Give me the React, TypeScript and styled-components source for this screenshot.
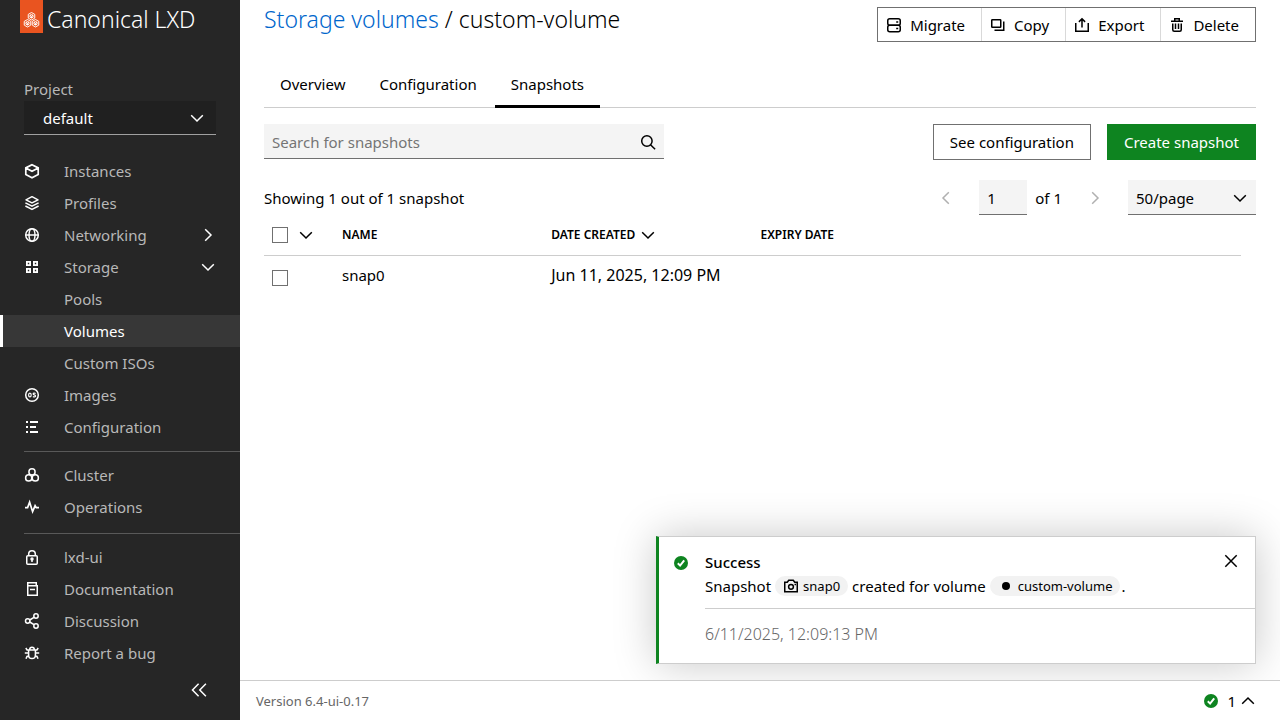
import React from "react";
import styled, { createGlobalStyle, css } from "styled-components";

const GlobalStyle = createGlobalStyle`
  *, *::before, *::after { box-sizing: border-box; }
  body {
    margin: 0;
    background: #fff;
    color: #000;
    font-family: "Noto Sans", "Open Sans", sans-serif;
    font-size: 15px;
    line-height: 24px;
  }
  button, input, select { font: inherit; color: inherit; }
  a { color: inherit; text-decoration: none; }
  svg { display: block; flex: none; }
`;

/* ---------- Icons ---------- */

const Svg = styled.svg.attrs({ viewBox: "0 0 16 16", width: 16, height: 16, "aria-hidden": true })`
  fill: none;
  stroke: currentColor;
  stroke-width: 1.5;
`;

type ChevronDirection = "down" | "up" | "left" | "right";
const chevrons: Record<ChevronDirection, string> = {
  down: "M2.2 5.2 8 11l5.8-5.8",
  up: "M2.2 10.8 8 5l5.8 5.8",
  left: "M10.8 2.2 5 8l5.8 5.8",
  right: "M5.2 2.2 11 8l-5.8 5.8",
};
const Chevron = ({ to }: { to: ChevronDirection }) => (
  <Svg><path d={chevrons[to]} /></Svg>
);

const icons = {
  instances: <Svg><path d="M8 1.8 14.200 4.900V11.500L8 14.700 1.800 11.500V4.900zM1.800 4.900 8 8.200l6.200-3.300" strokeWidth="1.700" /></Svg>,
  profiles: (
    <Svg strokeLinejoin="round">
      <path d="M8 1.700 14 4.800 8 7.900 2 4.800z" />
      <path d="M1.400 7.800 8 11.200l6.600-3.400M1.400 11 8 14.400l6.600-3.400" />
    </Svg>
  ),
  networking: (
    <Svg>
      <circle cx="8" cy="8" r="6.300" />
      <ellipse cx="8" cy="8" rx="3" ry="6.300" />
      <path d="M1.700 8h12.600" />
    </Svg>
  ),
  storage: (
    <Svg>
      <path
        d="M2.900 2.900h3.200v3.200H2.900zM9.900 2.900h3.200v3.200H9.900zM2.900 9.900h3.200v3.200H2.900zM9.900 9.900h3.200v3.200H9.900z"
        strokeWidth="1.800"
      />
    </Svg>
  ),
  images: (
    <Svg>
      <circle cx="8" cy="8" r="6.300" />
      <ellipse cx="5.900" cy="8" rx="1.300" ry="1.900" strokeWidth="1.200" />
      <path d="M11.600 6.500c-1.200-.8-2.600-.4-2.400.6.2.9 2.400.6 2.400 1.800 0 1.100-1.600 1.300-2.700.5" strokeWidth="1.200" />
    </Svg>
  ),
  configuration: (
    <Svg><path d="M2 3h2M6 3h8M2 8h2M6 8h6M2 13h2M6 13h8" strokeWidth="2" /></Svg>
  ),
  cluster: (
    <Svg>
      <circle cx="8" cy="4.900" r="3.100" />
      <circle cx="4.700" cy="10.900" r="3.100" />
      <circle cx="11.300" cy="10.900" r="3.100" />
    </Svg>
  ),
  operations: (
    <Svg><path d="M1 8.600h2.600l2-5.400 3 9.400 2.500-6 1.200 2H15" strokeWidth="1.700" /></Svg>
  ),
  lock: (
    <Svg>
      <rect x="2.750" y="6.750" width="10.500" height="8.500" rx="1" />
      <path d="M4.700 6.500V5a3.300 3.300 0 0 1 6.600 0v1.500M8 10v3" />
      <circle cx="8" cy="10" r="1" fill="currentColor" />
    </Svg>
  ),
  documentation: (
    <Svg><path d="M3.750 4.750h9.500v9.500h-9.500zM3.750 4.750v-3h8.500v3M6 8.500h5" /></Svg>
  ),
  share: (
    <Svg>
      <circle cx="12" cy="3" r="2.200" />
      <circle cx="3.700" cy="8" r="2.200" />
      <circle cx="12" cy="13" r="2.200" />
      <path d="M5.700 7 10 4.300M5.700 9l4.300 2.700" />
    </Svg>
  ),
  bug: (
    <Svg>
      <path d="M4.600 5h6.800v5c0 4.800-6.800 4.800-6.800 0zM5.700 4.500c0-3 4.600-3 4.600 0M.8 8h3.800M11.400 8h3.800M1.800 3l1.300 2h1.500M14.200 3l-1.300 2h-1.500M2 13.800l1-2.300 1.800-.5M14 13.800l-1-2.300-1.800-.5" />
    </Svg>
  ),
  collapse: <Svg><path d="M7.600 1.800 1.500 8l6.100 6.200M14.900 1.800 8.800 8l6.100 6.200" /></Svg>,
  migrate: (
    <Svg>
      <rect x="1.750" y="1.750" width="12.500" height="6.500" rx="2" />
      <rect x="1.750" y="8.250" width="12.500" height="6.500" rx="2" />
      <path d="M10.200 5h2M10.200 11.500h2" />
    </Svg>
  ),
  copy: (
    <Svg><rect x="1.750" y="2.750" width="9" height="7.500" rx=".6" /><path d="M13.750 4.500v8.750H4.500" /></Svg>
  ),
  exportIcon: (
    <Svg><path d="M1.750 6v8.250h12.500V6M8 10.500V2M4.900 4.900 8 1.800l3.100 3.100" /></Svg>
  ),
  remove: (
    <Svg>
      <path d="M2 4.250h12M5.750 4V1.750h4.500V4M3.750 6.500v6.250c0 1 .5 1.500 1.500 1.500h5.500c1 0 1.500-.5 1.500-1.500V6.500M6.500 6.500v5.500M9.500 6.500v5.500" />
    </Svg>
  ),
  search: <Svg><circle cx="6.900" cy="7" r="5.200" /><path d="m10.500 10.700 4.600 4.600" /></Svg>,
  close: <Svg><path d="m2.300 2.300 11.400 11.400M13.700 2.300 2.300 13.700" /></Svg>,
  camera: (
    <Svg>
      <path d="M1.750 4.250h2.500l1.500-2h4.500l1.500 2h2.500v9.500H1.750z" />
      <circle cx="8" cy="8.800" r="2.400" />
      <path d="M11.500 6.500h1.500" />
    </Svg>
  ),
  dot: <Svg><circle cx="8" cy="8" r="4" fill="currentColor" stroke="none" /></Svg>,
  success: (
    <Svg>
      <circle cx="8" cy="8" r="7" fill="#0e8420" stroke="none" />
      <path d="m4.800 8.300 2.300 2.300 4.100-5.300" stroke="#fff" strokeWidth="2" />
    </Svg>
  ),
};

const LogoMark = () => (
  <svg width="17" height="16" viewBox="0 0 34 32" fill="none" stroke="#fff" strokeWidth="1.900" aria-hidden="true">
    {[[17, 8.5], [9, 22.5], [25, 22.5]].map(([x, y]) => (
      <g key={x} transform={`translate(${x} ${y})`}>
        <path d="M0-7.500 6.500-3.800V3.800L0 7.500-6.500 3.800V-3.800zM0-3.600 3.100-1.800V1.800L0 3.600-3.100 1.800V-1.800zM0 0v3.600M0 0l3.100-1.800M0 0l-3.100-1.800" />
      </g>
    ))}
  </svg>
);

/* ---------- Shell ---------- */

const Shell = styled.div`
  display: grid;
  grid-template-columns: 240px minmax(0, 1fr);
  min-height: 100vh;
`;

const Sidebar = styled.nav`
  display: flex;
  flex-direction: column;
  background: #262626;
  color: #b8b8b8;
`;

const Brand = styled.a`
  display: flex;
  gap: 4px;
  height: 40px;
  padding-left: 20px;
  color: #fff;
  font-size: 23px;
  font-weight: 300;
  line-height: 38px;
  white-space: nowrap;
`;

const BrandTag = styled.span`
  display: flex;
  justify-content: center;
  align-items: flex-end;
  width: 23px;
  height: 33px;
  padding-bottom: 5px;
  background: #e95420;
`;

const ProjectPicker = styled.div`
  display: flex;
  flex-direction: column;
  padding: 37px 24px 20px;
`;

const ProjectButton = styled.button`
  display: flex;
  justify-content: space-between;
  align-items: center;
  height: 34px;
  padding: 0 11px 0 19px;
  border: 0;
  border-bottom: 1px solid #a0a0a0;
  background: #202020;
  color: #fff;
`;

const NavList = styled.ul`
  margin: 0;
  padding: 0;
  list-style: none;
`;

const Divider = styled.hr<{ $spaced?: boolean }>`
  width: auto;
  margin: ${(p) => (p.$spaced ? 10 : 8)}px 0 7px 24px;
  border: 0;
  border-top: 1px solid #595959;
`;

const navItem = css`
  display: flex;
  align-items: center;
  gap: 24px;
  width: 100%;
  height: 32px;
  border: 0;
  background: none;
  text-align: left;
  svg { color: #fff; }
`;

const NavLink = styled.a<{ $active?: boolean; $nested?: boolean }>`
  ${navItem}
  padding: 0 24px 0 ${(p) => (p.$nested ? 64 : 24)}px;
  ${(p) =>
    p.$active &&
    css`
      background: #373737;
      box-shadow: inset 3px 0 0 #fff;
      color: #fff;
    `}
`;

const NavToggle = styled.button`
  ${navItem}
  padding: 0 24px;
  svg:last-child { margin-left: auto; }
`;

const CollapseButton = styled.button`
  align-self: flex-end;
  margin: 10px 33px 0 0;
  padding: 3px 0;
  border: 0;
  background: none;
  color: #fff;
`;

const Main = styled.div`
  display: flex;
  flex-direction: column;
  min-width: 0;
`;

const Content = styled.main`
  position: relative;
  flex: 1;
  padding: 0 24px;
  overflow: hidden;
`;

/* ---------- Header and tabs ---------- */

const Header = styled.header`
  display: flex;
  justify-content: space-between;
  align-items: flex-start;
  height: 62px;
`;

const Title = styled.h1`
  display: flex;
  gap: 6px;
  margin: 0;
  font-size: 23px;
  font-weight: 300;
  line-height: 38px;
  a { color: #0066cc; }
`;

const Actions = styled.div`
  display: flex;
  margin-top: 7px;
  border: 1px solid #707070;
`;

const ActionButton = styled.button`
  display: flex;
  align-items: center;
  gap: 8px;
  height: 33px;
  padding: 0 16px 0 8px;
  border: 0;
  background: none;
  & + & { border-left: 1px solid #d9d9d9; }
`;

const Tabs = styled.nav`
  display: flex;
  gap: 2px;
  border-bottom: 1px solid #cdcdcd;
`;

const Tab = styled.a<{ $active?: boolean }>`
  height: 46px;
  margin-bottom: -1px;
  padding: 10px 16px 0;
  border-bottom: ${(p) => (p.$active ? "3px solid #000" : 0)};
`;

/* ---------- Toolbar ---------- */

const Toolbar = styled.div`
  display: flex;
  gap: 16px;
  padding: 16px 0 20px;
`;

const field = css`
  height: 35px;
  padding: 1px 8px 0;
  border: 0;
  border-bottom: 1px solid #707070;
  border-radius: 0;
  background: #f4f4f4;
`;

const SearchBox = styled.form`
  ${field}
  display: flex;
  align-items: center;
  flex: 0 1 400px;
  margin-right: auto;
`;

const SearchInput = styled.input`
  flex: 1;
  min-width: 0;
  padding: 0;
  border: 0;
  outline: 0;
  background: none;
  &::placeholder { color: #757575; }
`;

const IconButton = styled.button`
  display: flex;
  padding: 0;
  border: 0;
  background: none;
  &:disabled { color: #b0b0b0; }
`;

const Button = styled.button<{ $positive?: boolean }>`
  height: 36px;
  padding: 0 16px;
  border: 1px solid ${(p) => (p.$positive ? "#0e8420" : "#707070")};
  background: ${(p) => (p.$positive ? "#0e8420" : "#fff")};
  color: ${(p) => (p.$positive ? "#fff" : "#000")};
`;

const Pagination = styled.div`
  display: flex;
  align-items: center;
  justify-content: space-between;
`;

const Pager = styled.div`
  display: flex;
  align-items: center;
  gap: 25px;
`;

const PageNumber = styled.label`
  display: flex;
  align-items: center;
  gap: 8px;
  white-space: nowrap;
`;

const PageInput = styled.input`
  ${field}
  width: 48px;
`;

const SelectWrap = styled.div`
  position: relative;
  svg {
    position: absolute;
    top: 10px;
    right: 8px;
    pointer-events: none;
  }
`;

const Select = styled.select`
  ${field}
  width: 128px;
  appearance: none;
`;

/* ---------- Table ---------- */

const Table = styled.table`
  width: calc(100% - 15px);
  table-layout: fixed;
  border-collapse: collapse;
  text-align: left;
  th {
    height: 40px;
    padding: 0 8px;
    border-bottom: 1px solid #cdcdcd;
    font-size: 12px;
    font-weight: 600;
    text-transform: uppercase;
  }
  td {
    padding: 7px 8px;
    vertical-align: top;
  }
`;

const SelectColumn = styled.col`
  width: 70px;
`;

const Sortable = styled.span`
  display: flex;
  align-items: center;
  gap: 5px;
`;

const SelectAll = styled.div`
  display: flex;
  align-items: center;
  gap: 10px;
`;

const Checkbox = styled.input.attrs({ type: "checkbox" })`
  display: block;
  flex: none;
  width: 16px;
  height: 16px;
  margin: 0;
  appearance: none;
  border: 1px solid #707070;
  background: #fff;
  td & { margin-top: 7px; }
`;

const DateTime = styled.time`
  font-size: 16px;
`;

/* ---------- Notification and status bar ---------- */

const Notification = styled.section`
  position: absolute;
  right: 24px;
  bottom: 16px;
  display: flex;
  gap: 16px;
  width: 600px;
  padding-left: 14px;
  border: 1px solid #cdcdcd;
  border-left: 3px solid #0e8420;
  background: #fff;
  box-shadow: 0 0 40px rgba(0, 0, 0, 0.22);
  > svg { margin-top: 18px; }
`;

const NotificationBody = styled.div`
  flex: 1;
`;

const NotificationText = styled.div`
  position: relative;
  padding: 13px 0 10px;
  border-bottom: 1px solid #cdcdcd;
`;

const NotificationTitle = styled.h2`
  margin: 0;
  font-size: 15px;
  font-weight: 500;
`;

const Message = styled.p`
  display: flex;
  align-items: center;
  margin: 0;
`;

const Chip = styled.a`
  display: flex;
  align-items: center;
  gap: 4px;
  height: 20px;
  margin: 0 4px;
  padding: 0 8px;
  border-radius: 10px;
  background: #f2f2f2;
  font-size: 13px;
  &:last-child { margin-right: 1px; }
`;

const Timestamp = styled.p`
  margin: 0;
  padding: 13px 0 17px;
  color: #666;
  font-weight: 300;
`;

const CloseButton = styled(IconButton)`
  position: absolute;
  top: 16px;
  right: 16px;
`;

const StatusBar = styled.footer`
  display: flex;
  justify-content: space-between;
  align-items: center;
  height: 40px;
  padding: 0 24px 0 16px;
  border-top: 1px solid #cdcdcd;
  background: #fff;
  color: #666;
  font-size: 13px;
`;

const StatusButton = styled(IconButton)`
  align-items: center;
  gap: 4px;
  color: #000;
  font-size: 15px;
  span { padding-left: 4px; }
`;

export default function App() {
  return (
    <>
      <GlobalStyle />
      <Shell>
        <Sidebar aria-label="Main navigation">
          <Brand href="#">
            <BrandTag><LogoMark /></BrandTag>
            Canonical LXD
          </Brand>
          <ProjectPicker>
            <label htmlFor="project">Project</label>
            <ProjectButton id="project" type="button">default<Chevron to="down" /></ProjectButton>
          </ProjectPicker>
          <NavList>
            <li><NavLink href="#">{icons.instances}Instances</NavLink></li>
            <li><NavLink href="#">{icons.profiles}Profiles</NavLink></li>
            <li><NavToggle type="button">{icons.networking}Networking<Chevron to="right" /></NavToggle></li>
            <li>
              <NavToggle type="button">{icons.storage}Storage<Chevron to="down" /></NavToggle>
              <NavList>
                <li><NavLink href="#" $nested>Pools</NavLink></li>
                <li><NavLink href="#" $nested $active aria-current="page">Volumes</NavLink></li>
                <li><NavLink href="#" $nested>Custom ISOs</NavLink></li>
              </NavList>
            </li>
            <li><NavLink href="#">{icons.images}Images</NavLink></li>
            <li><NavLink href="#">{icons.configuration}Configuration</NavLink></li>
          </NavList>
          <Divider />
          <NavList>
            <li><NavLink href="#">{icons.cluster}Cluster</NavLink></li>
            <li><NavLink href="#">{icons.operations}Operations</NavLink></li>
          </NavList>
          <Divider $spaced />
          <NavList>
            <li><NavLink href="#">{icons.lock}lxd-ui</NavLink></li>
            <li><NavLink href="#">{icons.documentation}Documentation</NavLink></li>
            <li><NavLink href="#">{icons.share}Discussion</NavLink></li>
            <li><NavLink href="#">{icons.bug}Report a bug</NavLink></li>
          </NavList>
          <CollapseButton type="button" aria-label="Collapse navigation">{icons.collapse}</CollapseButton>
        </Sidebar>

        <Main>
          <Content>
            <Header>
              <Title>
                <a href="#">Storage volumes</a>
                <span>/</span>
                <span>custom-volume</span>
              </Title>
              <Actions>
                <ActionButton type="button">{icons.migrate}Migrate</ActionButton>
                <ActionButton type="button">{icons.copy}Copy</ActionButton>
                <ActionButton type="button">{icons.exportIcon}Export</ActionButton>
                <ActionButton type="button">{icons.remove}Delete</ActionButton>
              </Actions>
            </Header>
            <Tabs aria-label="Volume sections">
              <Tab href="#">Overview</Tab>
              <Tab href="#">Configuration</Tab>
              <Tab href="#" $active aria-current="page">Snapshots</Tab>
            </Tabs>
            <Toolbar>
              <SearchBox role="search" onSubmit={(e: React.FormEvent) => e.preventDefault()}>
                <SearchInput aria-label="Search for snapshots" placeholder="Search for snapshots" />
                <IconButton type="submit" aria-label="Search">{icons.search}</IconButton>
              </SearchBox>
              <Button type="button">See configuration</Button>
              <Button type="button" $positive>Create snapshot</Button>
            </Toolbar>
            <Pagination>
              <span>Showing 1 out of 1 snapshot</span>
              <Pager>
                <IconButton type="button" disabled aria-label="Previous page"><Chevron to="left" /></IconButton>
                <PageNumber>
                  <PageInput aria-label="Page number" defaultValue="1" />
                  of 1
                </PageNumber>
                <IconButton type="button" disabled aria-label="Next page"><Chevron to="right" /></IconButton>
                <SelectWrap>
                  <Select aria-label="Items per page" defaultValue="50">
                    <option value="50">50/page</option>
                  </Select>
                  <Chevron to="down" />
                </SelectWrap>
              </Pager>
            </Pagination>
            <Table>
              <colgroup>
                <SelectColumn />
                <col /><col /><col /><col />
                <SelectColumn />
              </colgroup>
              <thead>
                <tr>
                  <th>
                    <SelectAll>
                      <Checkbox aria-label="Select all" />
                      <IconButton type="button" aria-label="Selection options"><Chevron to="down" /></IconButton>
                    </SelectAll>
                  </th>
                  <th>Name</th>
                  <th><Sortable>Date created<Chevron to="down" /></Sortable></th>
                  <th>Expiry date</th>
                  <th aria-label="Size" />
                  <th aria-label="Actions" />
                </tr>
              </thead>
              <tbody>
                <tr>
                  <td><Checkbox aria-label="Select snap0" /></td>
                  <td>snap0</td>
                  <td><DateTime>Jun 11, 2025, 12:09 PM</DateTime></td>
                  <td />
                  <td />
                  <td />
                </tr>
              </tbody>
            </Table>
            <Notification role="status">
              {icons.success}
              <NotificationBody>
                <NotificationText>
                  <NotificationTitle>Success</NotificationTitle>
                  <Message>
                    Snapshot <Chip href="#">{icons.camera}snap0</Chip> created for volume{" "}
                    <Chip href="#">{icons.dot}custom-volume</Chip>.
                  </Message>
                  <CloseButton type="button" aria-label="Close notification">{icons.close}</CloseButton>
                </NotificationText>
                <Timestamp><DateTime>6/11/2025, 12:09:13 PM</DateTime></Timestamp>
              </NotificationBody>
            </Notification>
          </Content>
          <StatusBar>
            <span>Version 6.4-ui-0.17</span>
            <StatusButton type="button" aria-label="1 notification">
              {icons.success}<span>1</span><Chevron to="up" />
            </StatusButton>
          </StatusBar>
        </Main>
      </Shell>
    </>
  );
}
